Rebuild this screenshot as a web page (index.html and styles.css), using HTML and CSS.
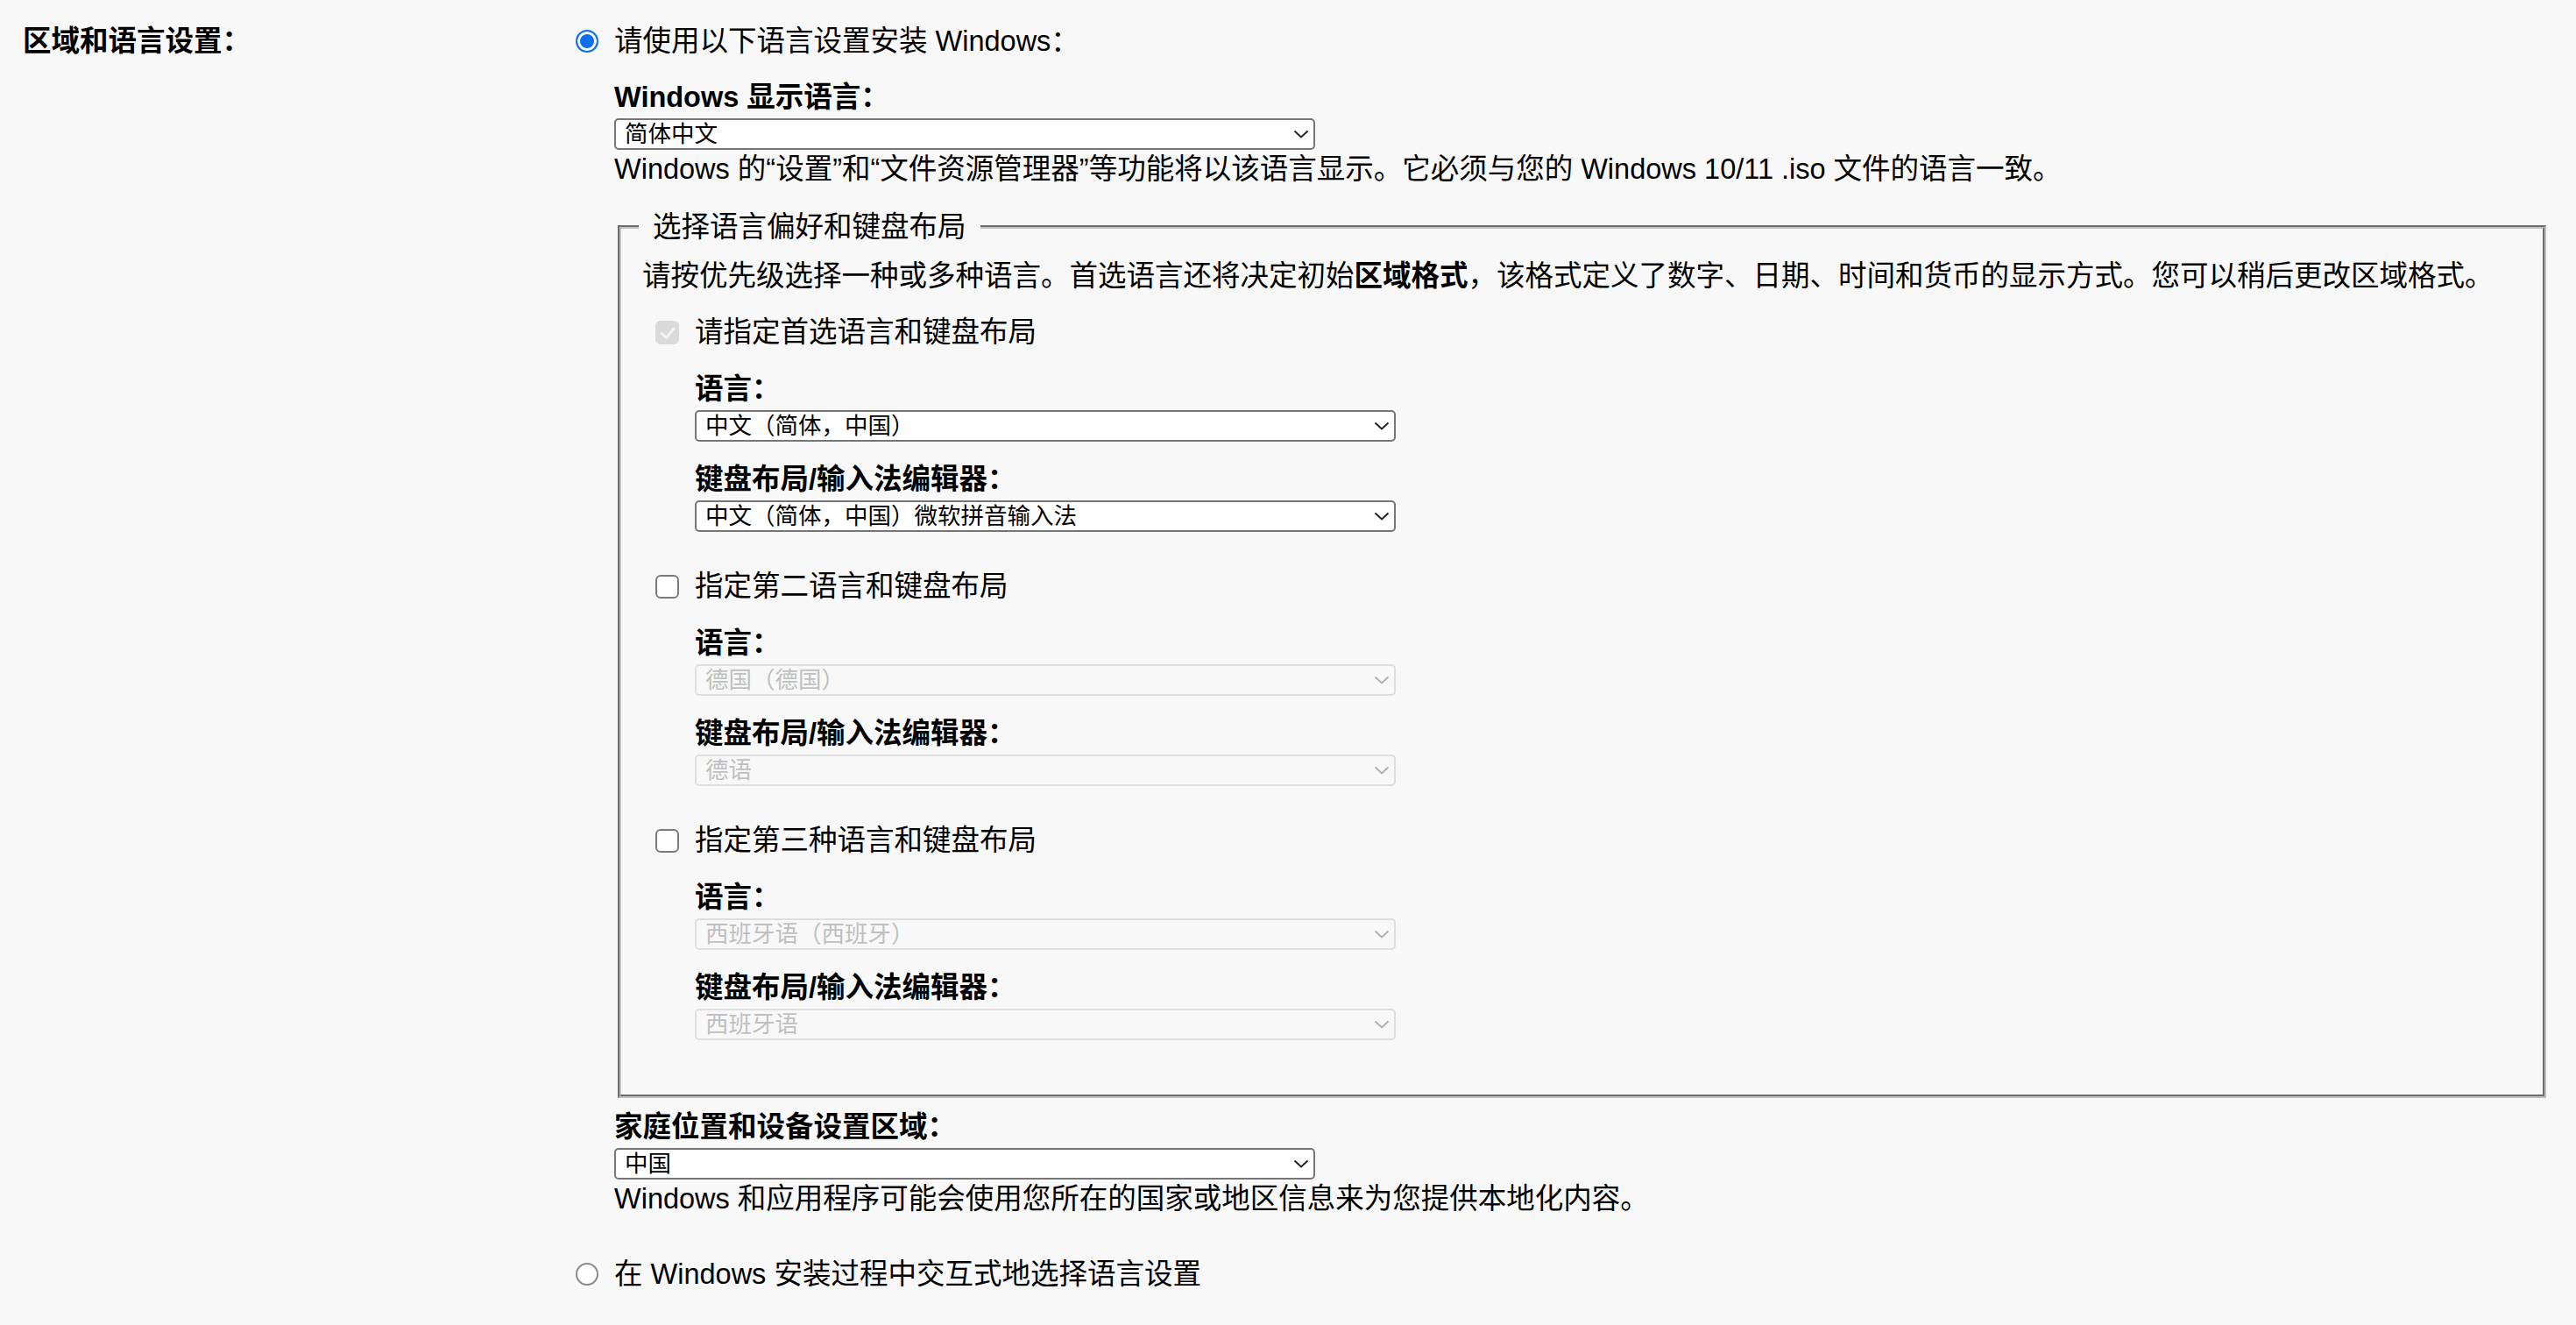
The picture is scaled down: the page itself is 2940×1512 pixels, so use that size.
FILE: index.html
```html
<!DOCTYPE html>
<html lang="zh-CN">
<head>
  <meta charset="UTF-8">
  <meta name="viewport" content="width=device-width, initial-scale=1.0">
  <title>区域和语言设置</title>
  <link rel="stylesheet" href="styles.css">
</head>
<body>
  <div class="setting">
    <div class="setting-name">区域和语言设置：</div>
    <div class="setting-value">
      <label class="choice">
        <input type="radio" name="langMode" class="radio" checked>
        <span>请使用以下语言设置安装 Windows：</span>
      </label>
      <div class="choice-body">
        <label class="field-label first" for="uiLanguage">Windows 显示语言：</label>
        <div class="select-wrap">
          <select id="uiLanguage" class="select">
            <option>简体中文</option>
          </select>
          <svg class="chevron" width="18" height="10" viewBox="0 0 18 10"><path d="M1.5 1.5 L9 8.5 L16.5 1.5" /></svg>
        </div>
        <div class="hint">Windows 的“设置”和“文件资源管理器”等功能将以该语言显示。它必须与您的 Windows 10/11 .iso 文件的语言一致。</div>

        <fieldset class="prefs">
          <legend>选择语言偏好和键盘布局</legend>
          <p class="intro">请按优先级选择一种或多种语言。首选语言还将决定初始<b>区域格式</b>，该格式定义了数字、日期、时间和货币的显示方式。您可以稍后更改区域格式。</p>

          <!-- first language -->
          <label class="check-row">
            <input type="checkbox" class="check" checked disabled>
            <span>请指定首选语言和键盘布局</span>
          </label>
          <div class="lang-fields">
            <label class="field-label">语言：</label>
            <div class="select-wrap">
              <select class="select"><option>中文（简体，中国）</option></select>
              <svg class="chevron" width="18" height="10" viewBox="0 0 18 10"><path d="M1.5 1.5 L9 8.5 L16.5 1.5" /></svg>
            </div>
            <label class="field-label">键盘布局/输入法编辑器：</label>
            <div class="select-wrap">
              <select class="select"><option>中文（简体，中国）微软拼音输入法</option></select>
              <svg class="chevron" width="18" height="10" viewBox="0 0 18 10"><path d="M1.5 1.5 L9 8.5 L16.5 1.5" /></svg>
            </div>
          </div>

          <!-- second language -->
          <label class="check-row spaced">
            <input type="checkbox" class="check">
            <span>指定第二语言和键盘布局</span>
          </label>
          <div class="lang-fields">
            <label class="field-label">语言：</label>
            <div class="select-wrap off">
              <select class="select" disabled><option>德国（德国）</option></select>
              <svg class="chevron" width="18" height="10" viewBox="0 0 18 10"><path d="M1.5 1.5 L9 8.5 L16.5 1.5" /></svg>
            </div>
            <label class="field-label">键盘布局/输入法编辑器：</label>
            <div class="select-wrap off">
              <select class="select" disabled><option>德语</option></select>
              <svg class="chevron" width="18" height="10" viewBox="0 0 18 10"><path d="M1.5 1.5 L9 8.5 L16.5 1.5" /></svg>
            </div>
          </div>

          <!-- third language -->
          <label class="check-row spaced">
            <input type="checkbox" class="check">
            <span>指定第三种语言和键盘布局</span>
          </label>
          <div class="lang-fields">
            <label class="field-label">语言：</label>
            <div class="select-wrap off">
              <select class="select" disabled><option>西班牙语（西班牙）</option></select>
              <svg class="chevron" width="18" height="10" viewBox="0 0 18 10"><path d="M1.5 1.5 L9 8.5 L16.5 1.5" /></svg>
            </div>
            <label class="field-label">键盘布局/输入法编辑器：</label>
            <div class="select-wrap off">
              <select class="select" disabled><option>西班牙语</option></select>
              <svg class="chevron" width="18" height="10" viewBox="0 0 18 10"><path d="M1.5 1.5 L9 8.5 L16.5 1.5" /></svg>
            </div>
          </div>
        </fieldset>

        <label class="field-label after-prefs" for="homeRegion">家庭位置和设备设置区域：</label>
        <div class="select-wrap">
          <select id="homeRegion" class="select">
            <option>中国</option>
          </select>
          <svg class="chevron" width="18" height="10" viewBox="0 0 18 10"><path d="M1.5 1.5 L9 8.5 L16.5 1.5" /></svg>
        </div>
        <div class="hint">Windows 和应用程序可能会使用您所在的国家或地区信息来为您提供本地化内容。</div>
      </div>

      <label class="choice later">
        <input type="radio" name="langMode" class="radio">
        <span>在 Windows 安装过程中交互式地选择语言设置</span>
      </label>
    </div>
  </div>
</body>
</html>
```

FILE: styles.css
```css
* {
  box-sizing: border-box;
}
body {
  margin: 0;
  background-color: #f8f8f8;
  color: #000;
  font-family: "Liberation Sans", "Noto Sans CJK SC", sans-serif;
  font-size: 32.5px;
  line-height: 44px;
}
.setting {
  display: grid;
  grid-template-columns: 631px 1fr;
  padding: 25px 30px 0 26px;
}
.setting-name {
  font-weight: bold;
}
.choice {
  display: flex;
  align-items: center;
  gap: 18px;
  height: 44px;
}
.choice.later {
  margin-top: 42px;
}
.radio {
  appearance: none;
  margin: 0;
  width: 26px;
  height: 26px;
  border: 2px solid #8a8a8a;
  border-radius: 50%;
  background-color: #fff;
  flex-shrink: 0;
}
.radio:checked {
  border-color: #0b6ff0;
  background-color: #0b6ff0;
  box-shadow: inset 0 0 0 3px #fff;
}
.choice-body {
  margin-left: 44px;
}
.field-label {
  display: block;
  font-weight: bold;
  margin-top: 22px;
}
.field-label.first {
  margin-top: 20px;
}
.field-label.after-prefs {
  margin-top: 11px;
}
.select-wrap {
  position: relative;
  width: 800px;
  margin-top: 2px;
}
.select {
  appearance: none;
  display: block;
  width: 100%;
  height: 36px;
  margin: 0;
  padding: 0 40px 0 10px;
  border: 2px solid #767676;
  border-radius: 5px;
  background-color: #fff;
  color: #000;
  font-family: "Liberation Sans", "Noto Sans CJK SC", sans-serif;
  font-size: 26.5px;
}
.select:disabled {
  border-color: #d4d4d4;
  background-color: #f9f9f9;
  color: #a8a8a8;
}
.chevron {
  position: absolute;
  right: 7px;
  top: 13px;
  pointer-events: none;
}
.chevron path {
  fill: none;
  stroke: #222;
  stroke-width: 2;
}
.off .chevron path {
  stroke: #b0b0b0;
}
.hint {
  margin: 0;
}
.prefs {
  margin: 22px 4px 0;
  padding: 12px 24px 62px;
  border: 4px groove rgb(192, 192, 192);
  min-width: 0;
}
.prefs legend {
  margin-left: -4px;
  padding: 0 16px;
  line-height: 44px;
}
.intro {
  margin: 0;
}
.check-row {
  display: flex;
  align-items: center;
  gap: 18px;
  height: 44px;
  margin-top: 20px;
  padding-left: 15px;
}
.check-row.spaced {
  margin-top: 40px;
}
.check {
  appearance: none;
  position: relative;
  margin: 0;
  width: 27px;
  height: 27px;
  border: 2px solid #7a7a7a;
  border-radius: 6px;
  background-color: #fff;
  flex-shrink: 0;
}
.check:checked:disabled {
  border-color: #dadada;
  background-color: #dadada;
}
.check:checked::after {
  content: "";
  position: absolute;
  left: 7px;
  top: 2px;
  width: 7px;
  height: 13px;
  border: solid #f4f4f4;
  border-width: 0 3px 3px 0;
  transform: rotate(40deg);
}
.lang-fields {
  padding-left: 60px;
}
.lang-fields .field-label {
  margin-top: 21px;
}
```
